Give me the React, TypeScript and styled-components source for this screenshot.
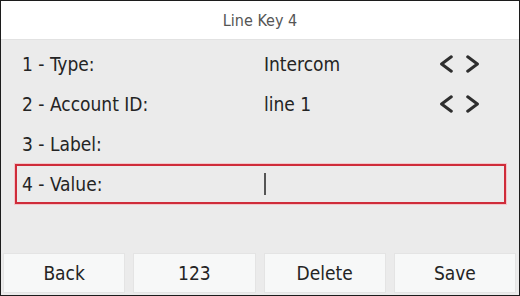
import React from "react";
import styled, { createGlobalStyle } from "styled-components";

const GlobalStyle = createGlobalStyle`
  html, body {
    margin: 0;
    padding: 0;
    background: #ffffff;
  }
  * {
    box-sizing: border-box;
  }
`;

const Screen = styled.div`
  width: 520px;
  height: 296px;
  border: 1px solid #1c1c1c;
  background: #ebebeb;
  display: flex;
  flex-direction: column;
  font-family: "DejaVu Sans Condensed", "Open Sans", sans-serif;
  color: #242424;
  overflow: hidden;
`;

const Header = styled.div`
  height: 39px;
  flex: none;
  background: #ffffff;
  border-bottom: 1px solid #e2e2e2;
  display: flex;
  align-items: center;
  justify-content: center;
  font-size: 16px;
  color: #555555;
`;

const List = styled.div`
  padding: 4px 13px 0 14px;
  display: flex;
  flex-direction: column;
`;

const Row = styled.div<{ $focused?: boolean }>`
  height: 40px;
  display: grid;
  grid-template-columns: 242px 1fr auto;
  align-items: center;
  padding: 0 24px 0 5px;
  font-size: 19px;
  border: 2px solid ${(p) => (p.$focused ? "#cf2c3a" : "transparent")};
  box-shadow: ${(p) => (p.$focused ? "0 0 0 1px #f3c6ca" : "none")};
`;

const Value = styled.span`
  display: flex;
  align-items: center;
`;

const Cursor = styled.span`
  display: inline-block;
  width: 2px;
  height: 22px;
  background: #555555;
`;

const Arrows = styled.div`
  display: flex;
  gap: 13px;
  align-items: center;
`;

const Spacer = styled.div`
  flex: 1;
`;

const SoftKeys = styled.div`
  display: flex;
  gap: 8px;
  padding: 0 3px 2px 2px;
  flex: none;
`;

const SoftKey = styled.div`
  flex: 1;
  height: 40px;
  background: #f7f8f8;
  border: 1px solid #e4e4e4;
  display: flex;
  align-items: center;
  justify-content: center;
  font-size: 19px;
  color: #242424;
`;

const Chevron = ({ dir }: { dir: "left" | "right" }) => (
  <svg width="14" height="18" viewBox="0 0 14 18">
    <path
      d={dir === "left" ? "M12.3 1.8 L2.6 9 L12.3 16.2" : "M1.7 1.8 L11.4 9 L1.7 16.2"}
      fill="none"
      stroke="#2e2e2e"
      strokeWidth="3"
      strokeLinecap="round"
      strokeLinejoin="round"
    />
  </svg>
);

const rows = [
  { label: "1 - Type:", value: "Intercom", arrows: true },
  { label: "2 - Account ID:", value: "line 1", arrows: true },
  { label: "3 - Label:", value: "", arrows: false },
];

export default function App() {
  return (
    <>
      <GlobalStyle />
      <Screen>
        <Header>Line Key 4</Header>
        <List>
          {rows.map((r) => (
            <Row key={r.label}>
              <span>{r.label}</span>
              <Value>{r.value}</Value>
              {r.arrows ? (
                <Arrows>
                  <Chevron dir="left" />
                  <Chevron dir="right" />
                </Arrows>
              ) : (
                <span />
              )}
            </Row>
          ))}
          <Row $focused>
            <span>4 - Value:</span>
            <Value>
              <Cursor />
            </Value>
            <span />
          </Row>
        </List>
        <Spacer />
        <SoftKeys>
          <SoftKey>Back</SoftKey>
          <SoftKey>123</SoftKey>
          <SoftKey>Delete</SoftKey>
          <SoftKey>Save</SoftKey>
        </SoftKeys>
      </Screen>
    </>
  );
}
